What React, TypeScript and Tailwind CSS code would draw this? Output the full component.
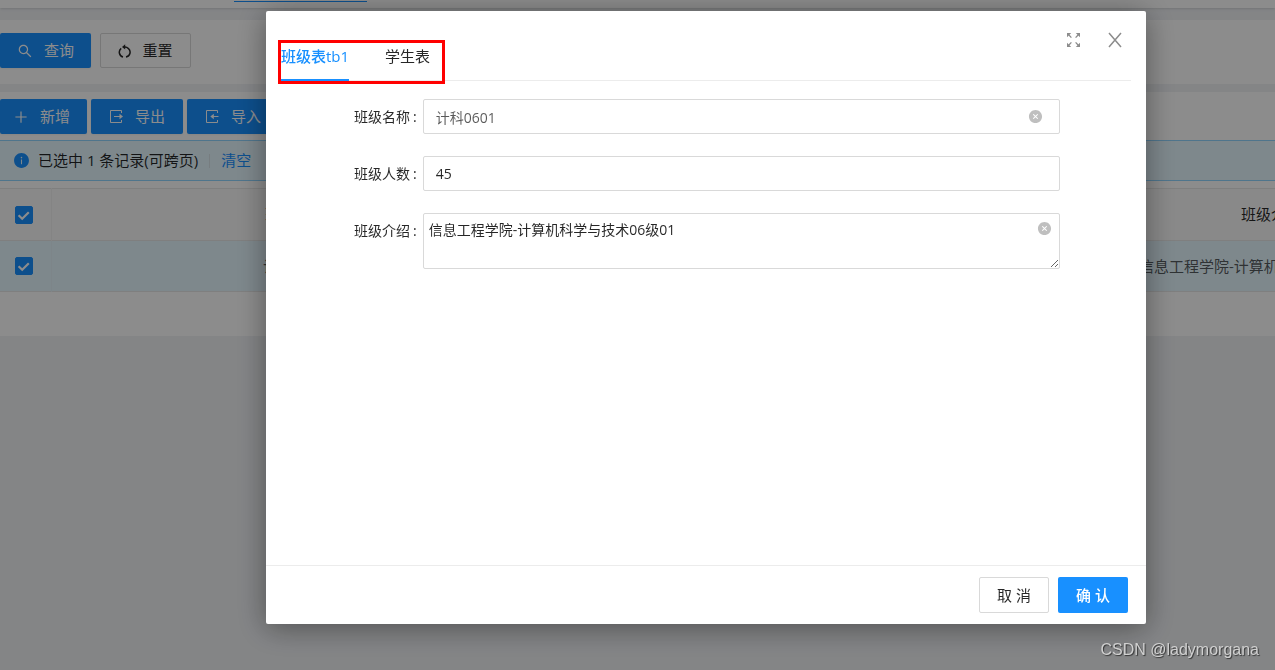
import { useState } from "react";
import { AiFillCloseCircle, AiFillInfoCircle, AiOutlinePlus, AiOutlineSearch } from "react-icons/ai";

interface ClassRecord {
  id: string;
  name: string;
  size: string;
  intro: string;
}

const records: ClassRecord[] = [
  { id: "1", name: "计科0601", size: "45", intro: "信息工程学院-计算机科学与技术06级01" },
];

const ResetIcon = () => (
  <svg width="13" height="16" viewBox="0 0 13 16" fill="none" stroke="currentColor" strokeWidth="1.5">
    <path d="M3.2 5.4A4.9 4.9 0 0 0 5 14M8 14A4.9 4.9 0 0 0 10.3 5.4C9.5 4.5 8.4 3.9 7 3.9" />
    <path d="M7.2 1.2V6.6L4 3.9Z" fill="currentColor" stroke="none" />
  </svg>
);

const ExportIcon = () => (
  <svg width="15" height="15" viewBox="0 0 15 15" fill="none" stroke="currentColor">
    <path d="M12.5 4V1.5H1.5V13.5H12.5V11M5 7.5H13" />
    <path d="M10.5 4.8L14 7.5L10.5 10.2Z" fill="currentColor" stroke="none" />
  </svg>
);

const ImportIcon = () => (
  <svg width="15" height="15" viewBox="0 0 15 15" fill="none" stroke="currentColor">
    <path d="M12.5 4V1.5H1.5V13.5H12.5V11M6.5 7.5H13.5" />
    <path d="M8.8 4.8L5.3 7.5L8.8 10.2Z" fill="currentColor" stroke="none" />
  </svg>
);

const FullscreenIcon = () => (
  <svg width="15" height="16" viewBox="0 0 15 16" fill="none" stroke="currentColor" strokeWidth="1.3">
    <path d="M2 2L5.4 5.6M13 2L9.6 5.6M2 14L5.4 10.4M13 14L9.6 10.4" />
    <path
      d="M1 1H5.2L1 5.2ZM14 1H9.8L14 5.2ZM1 15H5.2L1 10.8ZM14 15H9.8L14 10.8Z"
      fill="currentColor"
      stroke="none"
    />
  </svg>
);

const CloseIcon = () => (
  <svg width="14" height="16" viewBox="0 0 14 16" fill="none" stroke="currentColor" strokeWidth="1.5">
    <path d="M1 1L13 15M13 1L1 15" />
  </svg>
);

const CheckBox = ({ label }: { label: string }) => {
  const [checked, setChecked] = useState(true);
  return (
    <label className="relative mx-auto block size-[18px]">
      <input
        type="checkbox"
        aria-label={label}
        checked={checked}
        onChange={(e) => setChecked(e.target.checked)}
        className="block size-[18px] appearance-none rounded-xs border border-[#d9d9d9] bg-white checked:border-[#1890ff] checked:bg-[#1890ff]"
      />
      {checked && (
        <svg
          className="pointer-events-none absolute inset-0"
          viewBox="0 0 18 18"
          fill="none"
          stroke="white"
          strokeWidth="2.2"
        >
          <path d="M3.6 9.2L7.2 12.8L13.8 6.2" />
        </svg>
      )}
    </label>
  );
};

const primaryButton =
  "flex h-[35px] items-center gap-[11px] rounded-xs bg-[#1890ff] text-[15px] text-white shadow-xs";

const ListPage = () => (
  <div className="min-h-screen overflow-hidden bg-[#f0f2f5]">
    <div className="flex h-2 bg-white shadow-sm">
      <div className="mt-px ml-[234px] h-px w-[133px] bg-[#1890ff]" />
    </div>

    <section className="mt-3 flex gap-[9px] bg-white pt-[13px] pb-4">
      <button className={`${primaryButton} w-[91px] justify-center`}>
        <AiOutlineSearch size={16} />
        查询
      </button>
      <button className="flex h-[35px] w-[91px] items-center justify-center gap-[11px] rounded-xs border border-[#d9d9d9] bg-white text-[15px] text-black/85">
        <ResetIcon />
        重置
      </button>
    </section>

    <section className="mt-2 bg-white pt-[7px] pb-11">
      <div className="flex gap-1">
        <button className={`${primaryButton} w-[87px] pl-[13px]`}>
          <AiOutlinePlus size={16} />
          新增
        </button>
        <button className={`${primaryButton} w-[92px] pl-[18px]`}>
          <ExportIcon />
          导出
        </button>
        <button className={`${primaryButton} w-[92px] pl-[18px]`}>
          <ImportIcon />
          导入
        </button>
      </div>

      <div className="mt-[6px] flex h-[41px] items-center border-y border-[#91d5ff] bg-[#e6f7ff] pl-[13px] text-[15px] text-black/85">
        <AiFillInfoCircle size={17} className="mr-2 text-[#1890ff]" />
        <span>已选中 1 条记录(可跨页)</span>
        <span className="mx-[11px] h-[14px] w-px bg-[#d9e4ea]" />
        <a href="#clear" className="text-[#1890ff]">
          清空
        </a>
      </div>

      <div className="mt-[7px] overflow-hidden">
        {/* wider than the viewport, scrolled to the start */}
        <table className="w-[1515px] table-fixed border-collapse border-t border-[#e8e8e8] text-center text-[15px]">
          <thead>
            <tr className="h-[52px] border-b border-[#e8e8e8] bg-[#fafafa] text-black/85">
              <th className="w-[51px] border-r border-[#f0f0f0] pr-[2px]">
                <CheckBox label="全选" />
              </th>
              <th className="font-normal">班级名称</th>
              <th className="font-normal">班级人数</th>
              <th className="font-normal">班级介绍</th>
            </tr>
          </thead>
          <tbody>
            {records.map((r) => (
              <tr key={r.id} className="h-[51px] border-b border-[#e8e8e8] bg-[#e6f7ff] text-black/65">
                <td className="border-r border-[#e3f2fa] pr-[2px]">
                  <CheckBox label={r.name} />
                </td>
                <td>{r.name}</td>
                <td>{r.size}</td>
                <td>{r.intro}</td>
              </tr>
            ))}
          </tbody>
        </table>
      </div>
    </section>
  </div>
);

const fieldBox = "block w-full rounded-xs border border-[#d9d9d9] bg-white outline-none";

const EditDialog = () => {
  const [name, setName] = useState("计科0601");
  const [size, setSize] = useState("45");
  const [intro, setIntro] = useState("信息工程学院-计算机科学与技术06级01");

  return (
    <div
      role="dialog"
      aria-label="班级表"
      className="flex min-h-[613px] w-[880px] flex-col rounded-xs bg-white shadow-[0_4px_30px_rgba(0,0,0,0.4)]"
    >
      <div className="relative mx-[15px] flex h-[70px] items-end border-b border-[#ececec]">
        <div role="tablist" className="-mb-px flex gap-[36px] text-[15px]">
          <button role="tab" aria-selected="true" className="border-b-2 border-[#1890ff] pb-3 font-medium text-[#1890ff]">
            班级表tb1
          </button>
          <button role="tab" aria-selected="false" className="border-b-2 border-transparent pb-3 text-black/85">
            学生表
          </button>
        </div>
        <div className="absolute top-[29px] -left-[3px] h-11 w-[167px] border-3 border-[#ff0000]" />
        <div className="absolute top-[21px] right-[9px] flex gap-[27px] text-[#8c8c8c]">
          <button aria-label="全屏">
            <FullscreenIcon />
          </button>
          <button aria-label="关闭">
            <CloseIcon />
          </button>
        </div>
      </div>

      <form className="flex grow flex-col gap-[22px] px-[15px] pt-[18px] text-[14px] text-black/85">
        <div className="grid grid-cols-12">
          <label htmlFor="name" className="col-span-2 pr-[6px] text-right leading-[35px]">
            班级名称<span className="ml-[3px]">:</span>
          </label>
          <div className="relative col-span-9">
            <input
              id="name"
              value={name}
              onChange={(e) => setName(e.target.value)}
              className={`${fieldBox} h-[35px] px-3 text-black/65`}
            />
            <button
              type="button"
              aria-label="清除名称"
              onClick={() => setName("")}
              className="absolute top-[10px] right-[17px] text-[#bfbfbf]"
            >
              <AiFillCloseCircle size={15} />
            </button>
          </div>
        </div>
        <div className="grid grid-cols-12">
          <label htmlFor="size" className="col-span-2 pr-[6px] text-right leading-[35px]">
            班级人数<span className="ml-[3px]">:</span>
          </label>
          <div className="col-span-9">
            <input
              id="size"
              value={size}
              onChange={(e) => setSize(e.target.value)}
              className={`${fieldBox} h-[35px] px-3`}
            />
          </div>
        </div>
        <div className="grid grid-cols-12">
          <label htmlFor="intro" className="col-span-2 pr-[6px] text-right leading-[35px]">
            班级介绍<span className="ml-[3px]">:</span>
          </label>
          <div className="relative col-span-9">
            <textarea
              id="intro"
              value={intro}
              onChange={(e) => setIntro(e.target.value)}
              className={`${fieldBox} h-14 resize px-[5px] py-[5px] leading-[22px]`}
            />
            <button
              type="button"
              aria-label="清除介绍"
              onClick={() => setIntro("")}
              className="absolute top-2 right-2 text-[#bfbfbf]"
            >
              <AiFillCloseCircle size={15} />
            </button>
          </div>
        </div>
      </form>

      <div className="flex justify-end gap-[9px] border-t border-[#ececec] px-[18px] py-[11px] text-[15px]">
        <button className="h-9 w-[70px] rounded-xs border border-[#d9d9d9] bg-white text-black/85">取 消</button>
        <button className="h-9 w-[70px] rounded-xs bg-[#1890ff] font-medium text-white">确 认</button>
      </div>
    </div>
  );
};

export default function App() {
  return (
    <div className="relative font-['Open_Sans','Noto_Sans_CJK_SC',sans-serif]">
      <ListPage />
      <div className="fixed inset-0 flex items-start justify-center overflow-hidden bg-black/45 pt-[11px] pl-[137px]">
        <EditDialog />
      </div>
      <div className="fixed right-4 bottom-2 font-['Liberation_Sans',sans-serif] text-[16px] text-[#d0d0d0] [text-shadow:1px_1px_1px_rgba(0,0,0,0.6)]">
        CSDN @ladymorgana
      </div>
    </div>
  );
}
